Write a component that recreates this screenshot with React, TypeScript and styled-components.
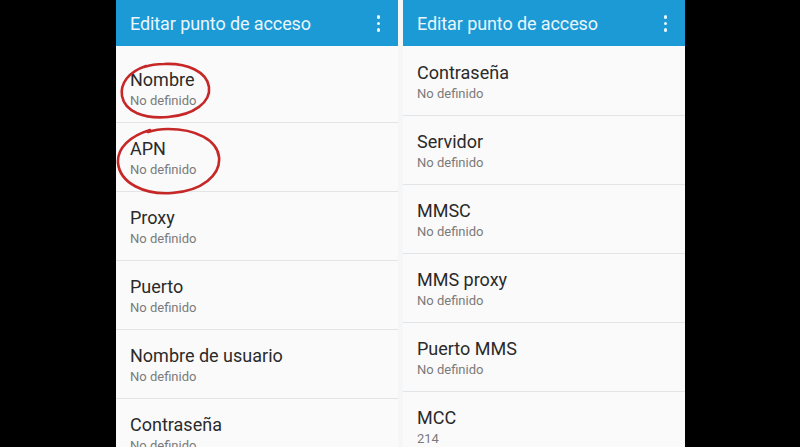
import React from 'react';
import styled, { createGlobalStyle } from 'styled-components';

const Global = createGlobalStyle`
  html, body {
    margin: 0;
    padding: 0;
    background: #000;
  }
  body {
    font-family: Roboto, "Noto Sans", "Liberation Sans", sans-serif;
  }
`;

const Stage = styled.div`
  width: 800px;
  height: 447px;
  overflow: hidden;
  background: #000;
  display: flex;
  padding-left: 116px;
  box-sizing: border-box;
`;

const Screens = styled.div`
  display: flex;
  gap: 5px;
  background: #f4f6f7;
  height: 100%;
`;

const Screen = styled.div`
  position: relative;
  width: 282px;
  height: 100%;
  background: #fafafa;
  display: flex;
  flex-direction: column;
  overflow: hidden;
`;

const Header = styled.div`
  height: 46px;
  flex-shrink: 0;
  background: #1b9ad6;
  display: flex;
  align-items: center;
  justify-content: space-between;
  padding: 0 18px 0 14px;
  color: #eaf6fc;
  font-size: 18px;
  letter-spacing: -0.1px;
`;

const Kebab = styled.div`
  display: flex;
  flex-direction: column;
  gap: 3px;
  margin-top: 1px;

  span {
    width: 3.5px;
    height: 3.5px;
    border-radius: 50%;
    background: #eaf6fc;
  }
`;

const List = styled.div<{ $top: number }>`
  padding-top: ${(p) => p.$top}px;
`;

const Row = styled.div`
  height: 69px;
  box-sizing: border-box;
  border-bottom: 1px solid #e2e4e5;
  padding: 15px 14px 0;
`;

const Title = styled.div`
  font-size: 18px;
  line-height: 22px;
  color: #2a2a2a;
`;

const Sub = styled.div`
  font-size: 13px;
  line-height: 18px;
  margin-top: 1px;
  color: #7a7a7a;
`;

const Marks = styled.svg`
  position: absolute;
  left: 0;
  top: 0;
  pointer-events: none;
`;

type Item = { title: string; value: string };

const left: Item[] = [
  { title: 'Nombre', value: 'No definido' },
  { title: 'APN', value: 'No definido' },
  { title: 'Proxy', value: 'No definido' },
  { title: 'Puerto', value: 'No definido' },
  { title: 'Nombre de usuario', value: 'No definido' },
  { title: 'Contraseña', value: 'No definido' },
];

const right: Item[] = [
  { title: 'Contraseña', value: 'No definido' },
  { title: 'Servidor', value: 'No definido' },
  { title: 'MMSC', value: 'No definido' },
  { title: 'MMS proxy', value: 'No definido' },
  { title: 'Puerto MMS', value: 'No definido' },
  { title: 'MCC', value: '214' },
];

const Panel: React.FC<{ items: Item[]; top: number; children?: React.ReactNode }> = ({
  items,
  top,
  children,
}) => (
  <Screen>
    <Header>
      Editar punto de acceso
      <Kebab>
        <span />
        <span />
        <span />
      </Kebab>
    </Header>
    <List $top={top}>
      {items.map((it, i) => (
        <Row key={i}>
          <Title>{it.title}</Title>
          <Sub>{it.value}</Sub>
        </Row>
      ))}
    </List>
    {children}
  </Screen>
);

const App: React.FC = () => {
  return (
    <>
      <Global />
      <Stage>
        <Screens>
          <Panel items={left} top={8}>
            {/* hand-drawn red circles over the first two rows */}
            <Marks width="282" height="447" viewBox="0 0 282 447">
              <g fill="none" stroke="#c62828" strokeWidth="2.6" strokeLinecap="round">
                <path d="M 30 66 C 12 72 4 84 6 96 C 9 112 28 119 52 117 C 78 115 95 102 93 87 C 91 72 72 63 48 64 C 40 64 34 65 28 67" />
                <path d="M 34 130 C 14 136 1 148 2 163 C 4 183 28 195 56 193 C 86 191 105 175 103 157 C 101 140 80 129 52 129 C 44 129 38 130 32 132" />
              </g>
            </Marks>
          </Panel>
          <Panel items={right} top={1} />
        </Screens>
      </Stage>
    </>
  );
};

export default App;
